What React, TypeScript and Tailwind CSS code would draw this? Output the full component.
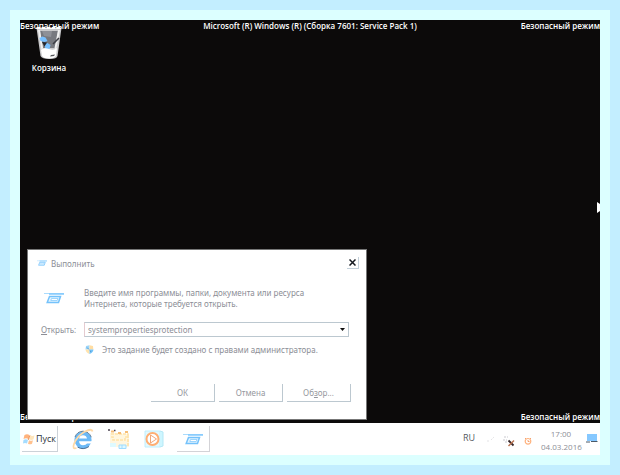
import { useState } from "react";

const RunIcon = ({ className }: { className: string }) => (
  <svg viewBox="0 0 20 12" className={className} aria-hidden="true">
    <path d="M0 1.500h20" stroke="#a9dbfd" strokeWidth="1" />
    <path d="M5 2h15" stroke="#7cc6fc" strokeWidth="1.400" />
    <path d="M5.500 4.500h11l-2 6H3.200z" fill="#e2f3ff" stroke="#74c2fb" strokeWidth="1.500" />
    <path d="M7.500 6.500h6.500l-.8 2H6.800z" fill="#ffffff" stroke="#86ccfc" strokeWidth="0.800" />
  </svg>
);

const RecycleBin = () => (
  <svg viewBox="0 0 28 34" className="h-[34px] w-7" aria-hidden="true">
    <path d="M1.500 2h25l-4 28q-.4 3-8 3t-9-3z" fill="#c9c9cb" />
    <path d="M5 5h18l-2.500 17H8z" fill="#77797f" />
    <path d="M3 4l3.500 20L8 22 5 4zM25 4l-4 20-1.500-2L23 4z" fill="#f0f0f0" />
    <path d="M7 5h10l-1 6-7-1z" fill="#8e9097" />
    <path d="M4.500 12l3-1.500 3 1 2 3.500-3 1-4-1z" fill="#78c0ff" />
    <path d="M9.500 18l3-1 3 2-1 4-4 1z" fill="#78c0ff" />
    <path d="M7 16l5 .5-2.500 4z" fill="#24262c" />
    <path d="M18 18l6-6" stroke="#3c3d44" strokeWidth="1.600" />
    <path d="M6 24q3-3 8-1t8-1l-1 8q-2 2.500-7 2.500T7 30z" fill="#ffffff" />
    <path d="M16 29l4-.5-1 1.500-4 .5z" fill="#55565a" />
    <path d="M1.500 2h25" stroke="#ffffff" strokeWidth="2" strokeDasharray="4 1" />
  </svg>
);

const Shield = () => (
  <svg viewBox="0 0 9 9" className="size-[9px]" aria-hidden="true">
    <path d="M1 1l3.500-.8L4.500 4.500H.5z" fill="#9ad5fb" />
    <path d="M4.500.2L8 1l.3 3.500H4.500z" fill="#ffdda3" />
    <path d="M.5 4.500h4V9Q1 7.500.5 4.500z" fill="#ffe3ad" />
    <path d="M4.500 4.500h4Q8 7.500 4.500 9z" fill="#73c2f8" />
    <path d="M2 2.500l2 2M5 5.500l1 1.500" stroke="#4e91c6" strokeWidth=".8" />
  </svg>
);

const WindowsFlag = () => (
  <svg viewBox="0 0 12 12" className="size-3" aria-hidden="true">
    <path d="M1.500 2q2.500-1.500 5 0L5.500 6q-2.500-1.500-5 0z" fill="#ffb27c" />
    <path d="M7 2.300q2.500 1.200 4.500 0l-1 4q-2 1.200-4.500 0z" fill="#ffe5ba" />
    <path d="M.5 7q2-1.400 4.500 0l-1 3.500Q2 9.500 0 10.500z" fill="#a5dcff" />
    <path d="M6 7.200q2 1.200 4 0l-1 3.500q-2 1.200-4 0z" fill="#ffc18e" />
    <path d="M6.800 2.500L5.200 7" stroke="#e77d43" strokeWidth=".8" />
  </svg>
);

const Explorer = () => (
  <svg viewBox="0 0 22 22" className="size-[22px]" aria-hidden="true">
    <circle cx="11" cy="12" r="8.600" fill="#6bb9f6" />
    <path d="M3 9q2-5.500 8-5.800 6 .3 8.300 6" fill="none" stroke="#56748f" strokeWidth=".9" />
    <path d="M7 10.500q.8-3.300 4-3.300t4 3.300z" fill="#ffffff" />
    <path d="M7 13.300h13.500v2.200h-5.500q-1 1.800-4 1.800-3.500 0-4-4z" fill="#ffffff" />
    <path d="M5.500 19q5.500 3.500 11.500-.5" fill="none" stroke="#476c92" strokeWidth="1" />
    <path d="M4.500 20q-4.500 1.500-2.500-4Q5 8 13 3.500q7-3.500 7.500 0" fill="none" stroke="#ffd9a6" strokeWidth="1.800" />
  </svg>
);

const Folder = () => (
  <svg viewBox="0 0 24 22" className="h-[22px] w-6" aria-hidden="true">
    <path d="M3 5h6l2 1h11v13H3z" fill="#fff6df" />
    <path d="M4 6h17v3h-3v3H6V9H3M21 7v11" fill="none" stroke="#ffe3aa" strokeWidth="1.600" strokeDasharray="3 1" />
    <path d="M4 3.500h3M11 5h3M18 4h3" stroke="#f6bd78" strokeWidth="1.800" />
    <path d="M1 2h2M7 2.500h1.500" stroke="#4a4250" strokeWidth="1.300" />
    <path d="M3 15h6v4H3z" fill="#defaff" />
    <path d="M12 17h7v3.500h-7zM15 17v3.500" fill="#dff8ff" stroke="#9fdcff" />
  </svg>
);

const MediaPlayer = () => (
  <svg viewBox="0 0 20 20" className="size-5" aria-hidden="true">
    <path d="M1 2h15v16H1z" fill="#e2f9ff" stroke="#c0eefc" />
    <path d="M16 2l3 1v14l-3 1" fill="#cef6ff" stroke="#b5e8f5" />
    <circle cx="8.500" cy="10" r="6" fill="#ffffff" stroke="#ffae73" strokeWidth="2" />
    <path d="M6.500 6l6 4-6 4z" fill="#ffffff" stroke="#f2a778" strokeWidth="1" />
  </svg>
);

const NetworkIcon = () => (
  <svg viewBox="0 0 12 12" className="size-3" aria-hidden="true">
    <path d="M1 2h4M0 5h4M2 7h3" stroke="#c9c9cf" strokeDasharray="2 1" />
    <path d="M5.500 5.500l5 5" stroke="#35272a" strokeWidth="1.800" />
    <path d="M11 5.500L5.500 11" stroke="#b8704e" strokeWidth="1.500" />
  </svg>
);

const AlertIcon = () => (
  <svg viewBox="0 0 8 8" className="size-2" aria-hidden="true">
    <circle cx="4" cy="4.300" r="2.800" fill="#ffffff" stroke="#ffb27d" strokeWidth="1.200" />
    <path d="M4 3v1.500h1.500M1 1l1 1M7 1L6 2" fill="none" stroke="#ef8b50" strokeWidth=".8" />
  </svg>
);

const DisplayIcon = () => (
  <svg viewBox="0 0 12 10" className="h-[10px] w-3" aria-hidden="true">
    <path d="M1 0h10v7H1z" fill="#86c8ff" />
    <path d="M0 8h4M5 7.500h6.500" fill="none" stroke="#4b5967" />
  </svg>
);

const caption = "absolute whitespace-nowrap text-[8px] leading-3";
const dialogButton =
  "h-[18px] w-16 border-r border-b border-[#bcc8d0] bg-white text-[#96989e]";

export default function App() {
  const [command, setCommand] = useState("systempropertiesprotection");

  return (
    <div className="min-h-screen bg-[#c3eeff] p-[10px] font-['Open_Sans',sans-serif]">
      <div className="flex min-h-[calc(100vh-20px)] flex-col bg-[#dcffff] p-[10px]">
        <main className="relative flex-1 overflow-hidden bg-[#0c0a0a] font-semibold text-white">
          <span className={`${caption} top-0 left-0 z-10`}>Безопасный режим</span>
          <span className={`${caption} top-0 left-1/2 -translate-x-1/2`}>
            Microsoft (R) Windows (R) (Сборка 7601: Service Pack 1)
          </span>
          <span className={`${caption} top-0 right-0`}>Безопасный режим</span>
          <span className={`${caption} bottom-0 left-0`}>Безопасный режим</span>
          <span className={`${caption} right-0 bottom-0`}>Безопасный режим</span>

          <div className="absolute top-[6px] left-2 flex w-[42px] flex-col items-center gap-[2px] text-[8px] leading-3">
            <RecycleBin />
            Корзина
          </div>

          <svg viewBox="0 0 3 11" className="absolute top-[182px] right-0 h-[11px] w-[3px]" aria-hidden="true">
            <path d="M0 0l3 2v7l-3 2z" fill="#ffffff" />
          </svg>

          <section
            role="dialog"
            aria-labelledby="run-title"
            className="absolute bottom-[3px] left-[7px] w-[340px] border border-[#777777] bg-white font-['Noto_Sans',sans-serif] text-[8px] leading-[11px] font-normal text-[#8c8e96]"
          >
            <header className="flex h-[26px] items-center gap-1 pr-[7px] pl-[9px]">
              <RunIcon className="h-[6px] w-[10px]" />
              <h1 id="run-title" className="flex-1">Выполнить</h1>
              <button type="button" aria-label="Закрыть" className="grid size-3 place-items-center border-r border-b border-[#c3d0da]">
                <svg viewBox="0 0 7 7" className="size-[7px]" aria-hidden="true">
                  <path d="M.5.5l6 6M6.500.5l-6 6" stroke="#161a20" strokeWidth="1.500" />
                </svg>
              </button>
            </header>

            <div className="flex items-center gap-5 pt-[11px] pl-4">
              <RunIcon className="h-3 w-5" />
              <p className="w-[240px]">
                Введите имя программы, папки, документа или ресурса
                <br />
                Интернета, которые требуется открыть.
              </p>
            </div>

            <div className="flex items-center pt-[13px] pr-[17px] pl-[13px]">
              <label htmlFor="command" className="w-[43px] shrink-0"><u>О</u>ткрыть:</label>
              <div className="flex h-[15px] flex-1 border border-[#bcc8d0] border-l-[#e5cbd0]">
                <input
                  id="command"
                  value={command}
                  onChange={(event) => setCommand(event.target.value)}
                  className="min-w-0 flex-1 px-[3px] outline-0"
                />
                <button type="button" aria-label="Показать список" className="grid w-[11px] place-items-center">
                  <svg viewBox="0 0 5 3" className="h-[3px] w-[5px]" aria-hidden="true">
                    <path d="M0 0h5L2.500 3z" fill="#101010" />
                  </svg>
                </button>
              </div>
            </div>

            <div className="flex items-center gap-2 pt-[7px] pl-[57px]">
              <Shield />
              <p>Это задание будет создано с правами администратора.</p>
            </div>

            <div className="flex justify-end gap-1 pt-[29px] pr-[15px] pb-[17px]">
              <button type="button" className={dialogButton}>ОК</button>
              <button type="button" className={dialogButton}>Отмена</button>
              <button type="button" className={dialogButton}>Об<u>з</u>ор...</button>
            </div>
          </section>
        </main>

        <footer className="flex h-8 items-center bg-white pr-[2px] text-[9px] leading-3 text-[#777a80]">
          <button type="button" className="ml-[2px] flex h-[26px] w-9 items-center justify-center gap-px border-r border-b border-[#ccd2d8] text-[#30363c]">
            <WindowsFlag />
            Пуск
          </button>
          <nav className="ml-[14px] flex flex-1 items-center gap-[13px]">
            <button type="button" aria-label="Internet Explorer"><Explorer /></button>
            <button type="button" aria-label="Проводник"><Folder /></button>
            <button type="button" aria-label="Проигрыватель"><MediaPlayer /></button>
            <button type="button" aria-label="Выполнить" className="grid h-[26px] w-[33px] place-items-center border-r border-b border-[#d3d3d7]">
              <RunIcon className="h-3 w-5" />
            </button>
          </nav>
          <span className="mr-[11px] pb-[2px] text-[#555a60]">RU</span>
          <svg viewBox="0 0 10 8" className="mr-[7px] h-2 w-[10px]" aria-hidden="true">
            <path d="M1 6h2M5 5l3-3" stroke="#e3e3e6" strokeDasharray="2 1" />
          </svg>
          <div className="flex items-center gap-[9px] pt-1">
            <NetworkIcon />
            <AlertIcon />
          </div>
          <time dateTime="2016-03-04T17:00" className="mr-[5px] ml-[9px] w-10 pt-px text-center text-[8px] leading-[13px] text-[#8c8e96]">
            17:00
            <br />
            04.03.2016
          </time>
          <DisplayIcon />
        </footer>
      </div>
    </div>
  );
}
